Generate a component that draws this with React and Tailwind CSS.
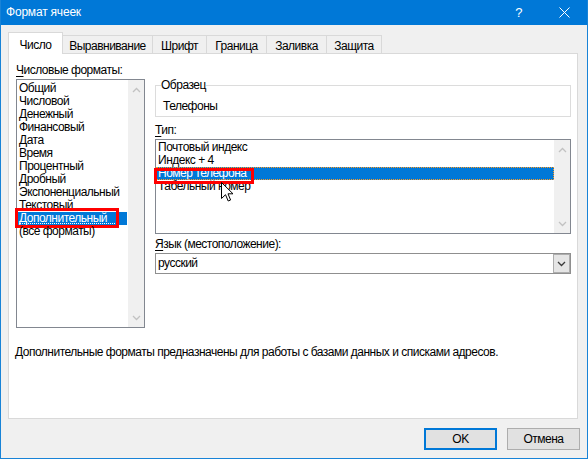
import React from 'react';

const font = { fontFamily: '"Liberation Sans", Arial, sans-serif' };

const formats = [
  'Общий',
  'Числовой',
  'Денежный',
  'Финансовый',
  'Дата',
  'Время',
  'Процентный',
  'Дробный',
  'Экспоненциальный',
  'Текстовый',
  'Дополнительный',
  '(все форматы)',
];

const types = ['Почтовый индекс', 'Индекс + 4', 'Номер телефона', 'Табельный номер'];

const tabs = [
  { label: 'Выравнивание', w: 'w-[90px]' },
  { label: 'Шрифт', w: 'w-[54px]' },
  { label: 'Граница', w: 'w-[60px]' },
  { label: 'Заливка', w: 'w-[60px]' },
  { label: 'Защита', w: 'w-[55px]' },
];

function Chevron({ up, color = '#c2c2c2' }) {
  return (
    <svg width="9" height="6" viewBox="0 0 9 6">
      <path d={up ? 'M1 5 L4.5 1.5 L8 5' : 'M1 1 L4.5 4.5 L8 1'} fill="none" stroke={color} strokeWidth="1.3" />
    </svg>
  );
}

function ScrollBar() {
  return (
    <div className="w-[16px] bg-[#f0f0f0] flex flex-col justify-between items-center pt-[7px] pb-[6px]">
      <Chevron up />
      <Chevron />
    </div>
  );
}

function Cursor() {
  return (
    <svg width="13" height="20" viewBox="0 0 13 20" className="absolute left-[65px] top-[15px] z-20">
      <path d="M0.5 0.5 L0.5 16.5 L4.5 12.7 L7.2 19 L9.6 18 L7 11.8 L12 11.8 Z" fill="#fff" stroke="#000" strokeWidth="1" strokeLinejoin="miter" />
    </svg>
  );
}

export default function App() {
  return (
    <div className="w-[588px] h-[460px] bg-white overflow-hidden text-[12px] leading-[13px] tracking-[-0.5px] text-black" style={font}>
      <div className="w-[588px] h-[459px] border-x border-b border-[#1883d7] bg-[#f0f0f0] flex flex-col">
        {/* title bar */}
        <div className="h-[25px] bg-[#0078d7] flex items-center text-white shrink-0">
          <span className="pl-[5px] text-[12px] tracking-[-0.2px]">Формат ячеек</span>
          <div className="ml-auto flex h-full">
            <div className="w-[45px] flex items-center justify-center text-[13px]">?</div>
            <div className="w-[46px] flex items-center justify-center">
              <svg width="11" height="11" viewBox="0 0 11 11">
                <path d="M0.5 0.5 L10.5 10.5 M10.5 0.5 L0.5 10.5" stroke="#fff" strokeWidth="1" />
              </svg>
            </div>
          </div>
        </div>

        {/* tabs */}
        <div className="flex items-end ml-[7px] mt-[7px] h-[22px] relative z-10">
          <div className="w-[55px] h-[22px] bg-white border-x border-t border-[#d9d9d9] flex justify-center pt-[6px]">
            Число
          </div>
          {tabs.map((t) => (
            <div key={t.label} className={`${t.w} h-[18px] mb-[1px] border-t border-r border-[#d9d9d9] flex justify-center pt-[4px]`}>
              {t.label}
            </div>
          ))}
        </div>

        {/* panel */}
        <div className="ml-[7px] w-[570px] h-[366px] -mt-[1px] bg-white border border-[#d9d9d9] flex flex-col">
          <div className="flex items-start pl-[7px] pt-[10px]">
            {/* left column */}
            <div className="flex flex-col w-[129px]">
              <div className="h-[13px]">
                <u className="underline-offset-2">Ч</u>исловые форматы:
              </div>
              <div className="mt-[2px] h-[249px] border border-[#828790] flex">
                <div className="flex-1 pt-[2px] pr-[1px]">
                  {formats.map((f) => {
                    const sel = f === 'Дополнительный';
                    return (
                      <div key={f} className={`h-[13px] pl-[2px] relative ${sel ? 'bg-[#0078d7] text-white' : ''}`}>
                        {f}
                        {sel && (
                          <>
                            <div className="absolute left-[2px] right-[10px] bottom-[1px] border-b border-dotted border-white" />
                            <div className="absolute left-[-2px] top-[-4px] w-[104px] h-[20px] border-[3px] border-[#ff0000]" />
                          </>
                        )}
                      </div>
                    );
                  })}
                </div>
                <ScrollBar />
              </div>
            </div>

            {/* right column */}
            <div className="ml-[10px] flex flex-col w-[416px]">
              <fieldset className="mt-[15px] border border-[#dcdcdc] pl-[5px] pb-[2px] h-[38px]">
                <legend className="leading-[13px]">Образец</legend>
                <div className="pl-[2px] mt-[8px]">Телефоны</div>
              </fieldset>

              <div className="mt-[7px] h-[13px]">
                <u className="underline-offset-2">Т</u>ип:
              </div>
              <div className="mt-[2px] h-[95px] border border-[#828790] flex">
                <div className="flex-1 pt-[1px]">
                  {types.map((t) => {
                    const sel = t === 'Номер телефона';
                    return (
                      <div
                        key={t}
                        className={`h-[13px] pl-[2px] relative ${sel ? 'bg-[#0078d7] text-white outline outline-1 outline-dotted outline-[#ff9a1f] -outline-offset-1' : ''}`}
                      >
                        {t}
                        {sel && (
                          <>
                            <div className="absolute left-[-2px] top-[1px] w-[100px] h-[16px] border-[3px] border-[#ff0000] z-10" />
                            <Cursor />
                          </>
                        )}
                      </div>
                    );
                  })}
                </div>
                <ScrollBar />
              </div>

              <div className="mt-[4px] h-[13px]">
                <u className="underline-offset-2">Я</u>зык (местоположение):
              </div>
              <div className="mt-[2px] h-[21px] border border-[#8f8f8f] flex items-stretch">
                <div className="flex-1 pl-[2px] flex items-center">русский</div>
                <div className="w-[17px] bg-[#e5e5e5] border border-[#adadad] flex items-center justify-center">
                  <Chevron color="#3a3a3a" />
                </div>
              </div>
            </div>
          </div>

          <div className="mt-[18px] pl-[6px] h-[13px]">
            Дополнительные форматы предназначены для работы с базами данных и списками адресов.
          </div>
        </div>

        {/* buttons */}
        <div className="flex justify-end gap-[10px] mt-[9px] pr-[7px]">
          <button className="w-[73px] h-[22px] bg-[#e1e1e1] border-2 border-[#0078d7] flex items-center justify-center">
            OK
          </button>
          <button className="w-[73px] h-[22px] bg-[#e1e1e1] border border-[#adadad] flex items-center justify-center">
            Отмена
          </button>
        </div>
      </div>
    </div>
  );
}
